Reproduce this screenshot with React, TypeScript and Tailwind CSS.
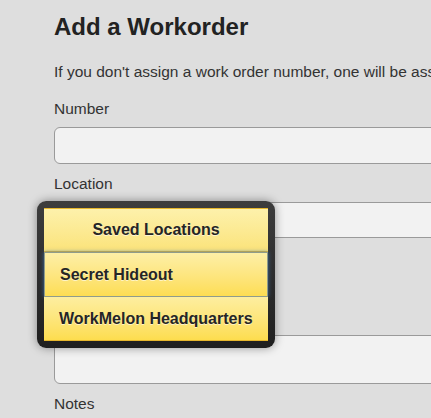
import React from 'react';

const savedLocations = ['Secret Hideout', 'WorkMelon Headquarters'];

const Field = ({ label, height }: { label: string; height: string }) => (
  <div>
    <label className="block text-[15.5px] leading-5 text-[#333] mb-2">{label}</label>
    <div className={`${height} w-[520px] bg-[#f2f2f2] border border-[#9a9a9a] rounded-l-[6px]`} />
  </div>
);

const SavedLocationsMenu = () => (
  <div className="absolute left-[37px] top-[201px] w-[238px] p-[7px] rounded-[9px] bg-gradient-to-b from-[#3d3d3d] to-[#1f1f1f] shadow-[0_0_10px_rgba(0,0,0,0.4)]">
    <div className="font-bold text-[16px] text-[#252525] [text-shadow:0_1px_0_rgba(255,255,255,0.6)]">
      <div className="h-[44px] flex items-center justify-center border-t border-b border-[#e6b62c] bg-gradient-to-b from-[#fdf1ab] to-[#fbe37a]">
        Saved Locations
      </div>
      <div className="h-[45px] flex items-center pl-[15px] border border-[#8f9c8c] shadow-[0_0_4px_rgba(60,120,190,0.8)] bg-gradient-to-b from-[#fdefa6] to-[#fddd52]">
        {savedLocations[0]}
      </div>
      <div className="h-[44px] flex items-center pl-[15px] border-b border-[#e6b62c] bg-gradient-to-b from-[#fdee9f] to-[#fddd4e]">
        {savedLocations[1]}
      </div>
    </div>
  </div>
);

export default function App() {
  return (
    <div className="relative w-[431px] h-[418px] overflow-hidden bg-[#dedede] font-['Liberation_Sans',Arial,sans-serif]">
      <div className="pl-[54px] pt-[15px]">
        <h1 className="text-[24px] leading-none font-bold text-[#222]">Add a Workorder</h1>
        <p className="mt-[23px] text-[15.5px] leading-5 text-[#333] whitespace-nowrap">
          If you don't assign a work order number, one will be assigned for you.
        </p>
        <div className="mt-[17px]">
          <Field label="Number" height="h-[37px]" />
        </div>
        <div className="mt-[10px]">
          <Field label="Location" height="h-[36px]" />
        </div>
        <div className="h-[97px]" />
        <div className="h-[49px] w-[520px] bg-[#f2f2f2] border border-[#9a9a9a] rounded-l-[6px]" />
        <label className="block mt-[10px] text-[15.5px] leading-5 text-[#333]">Notes</label>
      </div>
      <SavedLocationsMenu />
    </div>
  );
}
